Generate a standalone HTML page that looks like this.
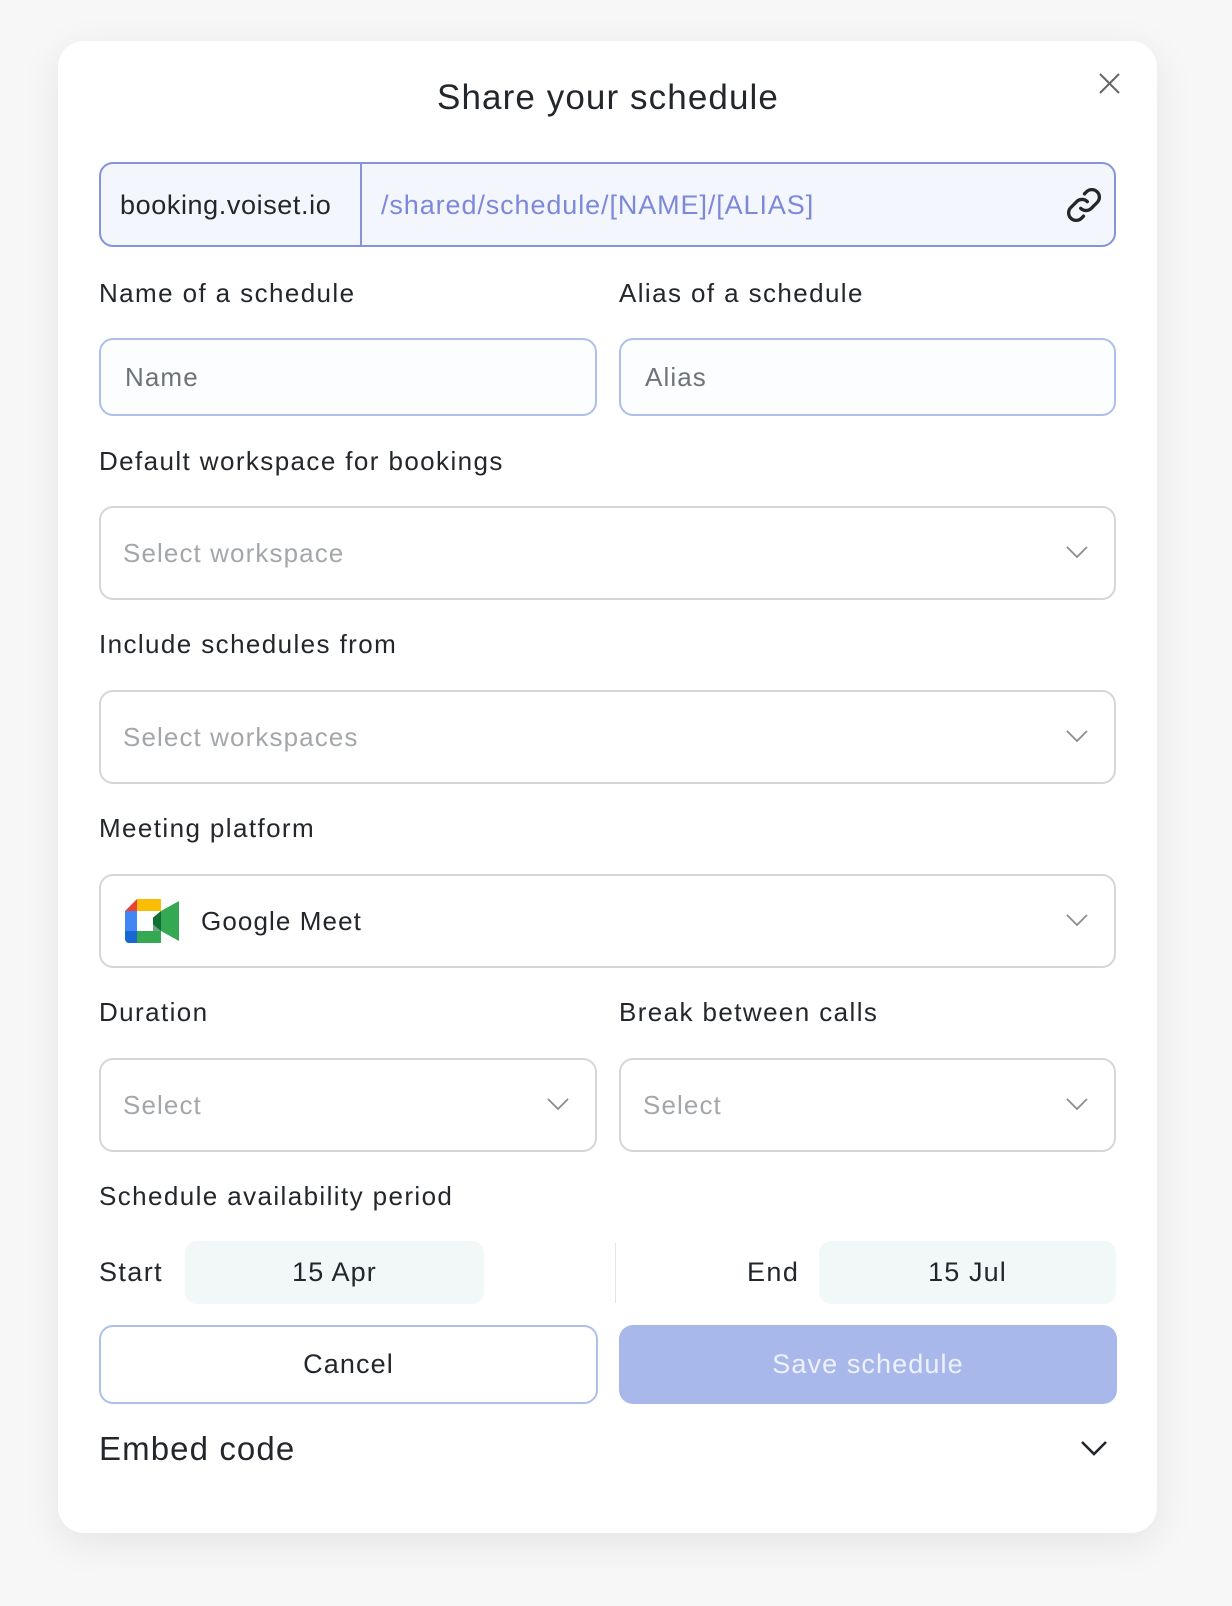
<!DOCTYPE html>
<html><head><meta charset="utf-8"><style>
*{box-sizing:border-box;margin:0;padding:0}
body{width:1232px;height:1606px;background:#f7f7f7;font-family:"Liberation Sans",sans-serif;color:#23272b;position:relative;overflow:hidden;letter-spacing:1.1px}
.modal{position:absolute;left:58px;top:41px;width:1099px;height:1492px;background:#fff;border-radius:26px;box-shadow:0 10px 40px rgba(0,0,0,.08)}
.a{position:absolute}
.lbl{position:absolute;font-size:26px;color:#23272b;line-height:30px;letter-spacing:1.4px}
.inp{position:absolute;border:2px solid #adc0ea;border-radius:14px;background:#fcfdff;font-size:26px;color:#6f7378;padding-left:24px;display:flex;align-items:center}
.sel{position:absolute;border:2px solid #d6d6d6;border-radius:14px;background:#fff;font-size:26px;color:#a4a7aa;padding-left:22px;display:flex;align-items:center}
.chev{position:absolute;right:26px;top:50%;margin-top:-8px}
.date{position:absolute;background:#f2f7f7;border-radius:12px;font-size:27px;display:flex;align-items:center;justify-content:center;color:#23272b}
</style></head><body>
<div class="modal"></div>
<div class="a" style="left:0;top:98px;width:1216px;text-align:center;font-size:35px;line-height:40px;margin-top:-20px">Share your schedule</div>
<svg class="a" style="left:1099px;top:73px" width="21" height="21" viewBox="0 0 21 21"><path d="M1 1L20 20M20 1L1 20" stroke="#666" stroke-width="2"/></svg>

<div class="a" style="left:99px;top:162px;width:1017px;height:85px;border:2px solid #8494d6;border-radius:14px;background:#f3f6fd"></div>
<div class="a" style="left:360px;top:163px;width:2px;height:83px;background:#8494d6"></div>
<div class="a" style="left:120px;top:190px;font-size:27px;line-height:30px;letter-spacing:0.6px">booking.voiset.io</div>
<div class="a" style="left:381px;top:190px;font-size:27px;line-height:30px;color:#7d88db;letter-spacing:0.9px">/shared/schedule/[NAME]/[ALIAS]</div>
<svg class="a" style="left:1064px;top:185px" width="40" height="40" viewBox="0 0 24 24" fill="none" stroke="#23272b" stroke-width="2" stroke-linecap="round"><path d="M10 14a4.5 4.5 0 0 0 6.4 0l3.5-3.5a4.5 4.5 0 0 0-6.4-6.4l-1.2 1.2"/><path d="M14 10a4.5 4.5 0 0 0-6.4 0l-3.5 3.5a4.5 4.5 0 0 0 6.4 6.4l1.2-1.2"/></svg>

<div class="lbl" style="left:99px;top:278px">Name of a schedule</div>
<div class="lbl" style="left:619px;top:278px">Alias of a schedule</div>
<div class="inp" style="left:99px;top:338px;width:498px;height:78px">Name</div>
<div class="inp" style="left:619px;top:338px;width:497px;height:78px">Alias</div>

<div class="lbl" style="left:99px;top:446px">Default workspace for bookings</div>
<div class="sel" style="left:99px;top:506px;width:1017px;height:94px">Select workspace<svg class="chev" width="22" height="14" viewBox="0 0 22 14"><path d="M1 2l10 10 10-10" fill="none" stroke="#8a8d90" stroke-width="1.8"/></svg></div>

<div class="lbl" style="left:99px;top:629px">Include schedules from</div>
<div class="sel" style="left:99px;top:690px;width:1017px;height:94px">Select workspaces<svg class="chev" width="22" height="14" viewBox="0 0 22 14"><path d="M1 2l10 10 10-10" fill="none" stroke="#8a8d90" stroke-width="1.8"/></svg></div>

<div class="lbl" style="left:99px;top:813px">Meeting platform</div>
<div class="sel" style="left:99px;top:874px;width:1017px;height:94px;color:#23272b;padding-left:24px">
<svg width="54" height="44" viewBox="0 0 54 44" style="margin-right:22px">
<path d="M12 0H36V12H12Z" fill="#fbbc04"/>
<path d="M12 0V12H0Z" fill="#ea4335"/>
<path d="M0 12H12V32H0Z" fill="#4285f4"/>
<path d="M0 32H12V44H4A4 4 0 0 1 0 40Z" fill="#1967d2"/>
<path d="M12 32H36V44H12Z" fill="#34a853"/>
<path d="M24 22L36 12V32Z" fill="#188038"/>
<path d="M36 12L54 2V42L36 32Z" fill="#34a853"/>
<path d="M36 12V32H24V22Z" fill="#0d652d" opacity=".6"/>
<rect x="12" y="12" width="16" height="20" fill="#fff"/>
</svg>Google Meet<svg class="chev" width="22" height="14" viewBox="0 0 22 14"><path d="M1 2l10 10 10-10" fill="none" stroke="#8a8d90" stroke-width="1.8"/></svg></div>

<div class="lbl" style="left:99px;top:997px">Duration</div>
<div class="lbl" style="left:619px;top:997px">Break between calls</div>
<div class="sel" style="left:99px;top:1058px;width:498px;height:94px">Select<svg class="chev" width="22" height="14" viewBox="0 0 22 14"><path d="M1 2l10 10 10-10" fill="none" stroke="#8a8d90" stroke-width="1.8"/></svg></div>
<div class="sel" style="left:619px;top:1058px;width:497px;height:94px">Select<svg class="chev" width="22" height="14" viewBox="0 0 22 14"><path d="M1 2l10 10 10-10" fill="none" stroke="#8a8d90" stroke-width="1.8"/></svg></div>

<div class="lbl" style="left:99px;top:1181px">Schedule availability period</div>
<div class="lbl" style="left:99px;top:1257px;font-size:27px">Start</div>
<div class="date" style="left:185px;top:1241px;width:299px;height:63px">15 Apr</div>
<div class="a" style="left:615px;top:1243px;width:1px;height:60px;background:#e4e4e4"></div>
<div class="lbl" style="left:747px;top:1257px;font-size:27px">End</div>
<div class="date" style="left:819px;top:1241px;width:297px;height:63px">15 Jul</div>

<div class="a" style="left:99px;top:1325px;width:499px;height:79px;border:2px solid #adc0ea;border-radius:14px;display:flex;align-items:center;justify-content:center;font-size:27px">Cancel</div>
<div class="a" style="left:619px;top:1325px;width:498px;height:79px;background:#a9b8ea;border-radius:14px;display:flex;align-items:center;justify-content:center;font-size:27px;color:#eef1fb">Save schedule</div>

<div class="a" style="left:99px;top:1430px;font-size:33px;line-height:38px">Embed code</div>
<svg class="a" style="left:1080px;top:1440px" width="28" height="17" viewBox="0 0 28 17"><path d="M2 2l12 12 12-12" fill="none" stroke="#23272b" stroke-width="2.6"/></svg>
</body></html>
